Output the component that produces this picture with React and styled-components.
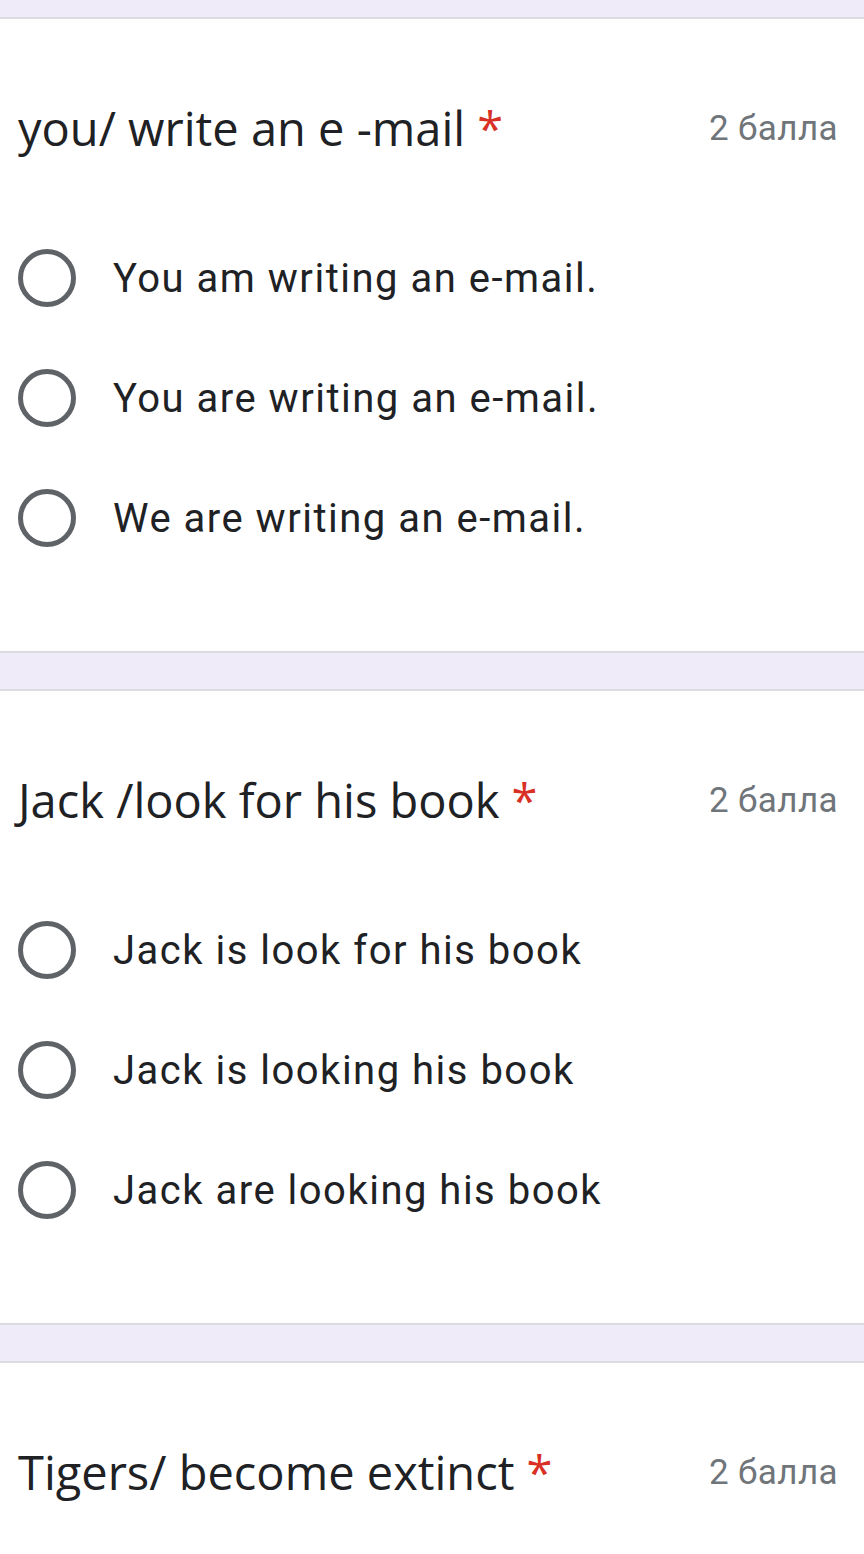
import React from 'react'
import styled, { createGlobalStyle } from 'styled-components'

const GlobalStyle = createGlobalStyle`
  html, body {
    margin: 0;
    padding: 0;
    background: #efebf8;
  }
  body {
    font-family: Roboto, "Liberation Sans", sans-serif;
  }
`

const Page = styled.div`
  display: flex;
  flex-direction: column;
  gap: 36px;
  padding-top: 17px;
  padding-bottom: 40px;
`

const Card = styled.section`
  background: #fff;
  border-top: 2px solid #dadce0;
  border-bottom: 2px solid #dadce0;
  padding: 79px 26px 73px 18px;
`

const Header = styled.div`
  display: flex;
  align-items: center;
  justify-content: space-between;
  height: 60px;
`

const Title = styled.div`
  font-family: "Open Sans", Lato, sans-serif;
  font-size: 47px;
  color: #202124;
  white-space: nowrap;
`

const Required = styled.span`
  color: #d93025;
  margin-left: 12px;
`

const Points = styled.div`
  font-family: Roboto, sans-serif;
  font-size: 35px;
  color: #70757a;
  letter-spacing: 0.4px;
`

const Options = styled.div`
  display: flex;
  flex-direction: column;
  margin-top: 60px;
`

const Option = styled.label`
  display: flex;
  align-items: center;
  height: 120px;
  gap: 37px;
`

const Radio = styled.span`
  box-sizing: border-box;
  width: 58px;
  height: 58px;
  border-radius: 50%;
  border: 5px solid #5f6368;
  flex: none;
`

const OptionText = styled.span`
  font-family: Roboto, sans-serif;
  font-size: 40px;
  color: #202124;
  letter-spacing: 1.5px;
`

const questions = [
  {
    title: 'you/ write an e -mail',
    options: ['You am writing an e-mail.', 'You are writing an e-mail.', 'We are writing an e-mail.'],
  },
  {
    title: 'Jack /look for his book',
    options: ['Jack is look for his book', 'Jack is looking his book', 'Jack are looking his book'],
  },
  {
    title: 'Tigers/ become extinct',
    options: [],
  },
]

const Question = ({ title, options }) => (
  <Card>
    <Header>
      <Title>
        {title}
        <Required>*</Required>
      </Title>
      <Points>2 балла</Points>
    </Header>
    {options.length > 0 && (
      <Options>
        {options.map((o) => (
          <Option key={o}>
            <Radio />
            <OptionText>{o}</OptionText>
          </Option>
        ))}
      </Options>
    )}
  </Card>
)

export default function App() {
  return (
    <>
      <GlobalStyle />
      <Page>
        {questions.map((q) => (
          <Question key={q.title} {...q} />
        ))}
      </Page>
    </>
  )
}
